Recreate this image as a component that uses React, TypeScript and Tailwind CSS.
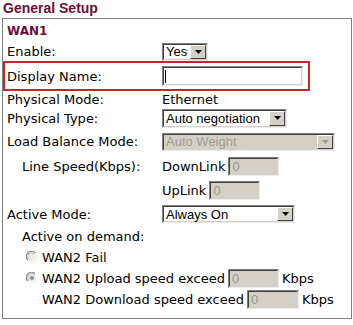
import React from "react";

function Arrow({ disabled }: { disabled?: boolean }) {
  return (
    <div className="h-full w-[16px] bg-[#d4d0c8] border border-t-white border-l-white border-r-[#404040] border-b-[#404040] flex items-center justify-center">
      <svg width="7" height="4" viewBox="0 0 7 4">
        <path d="M0 0H7L3.5 4Z" fill={disabled ? "#9a9a9a" : "#000"} />
      </svg>
    </div>
  );
}

function Select({ text, className, disabled }: { text: string; className: string; disabled?: boolean }) {
  return (
    <div className={`${className} border border-t-[#7f7f7f] border-l-[#7f7f7f] border-r-[#ececec] border-b-[#ececec]`}>
      <div
        className={`h-full w-full flex items-stretch border border-t-[#404040] border-l-[#404040] border-r-[#d4d0c8] border-b-[#d4d0c8] ${
          disabled ? "bg-[#d4d0c8]" : "bg-white"
        }`}
      >
        <div
          className={`flex-1 flex items-center pl-[2px] font-['Liberation_Sans',sans-serif] text-[13px] leading-none ${
            disabled ? "text-[#a09c94]" : "text-black"
          }`}
        >
          {text}
        </div>
        <div className="p-0">
          <Arrow disabled={disabled} />
        </div>
      </div>
    </div>
  );
}

function DisInput({ className }: { className: string }) {
  return (
    <div className={`${className} border border-t-[#7f7f7f] border-l-[#7f7f7f] border-r-[#ececec] border-b-[#ececec]`}>
      <div className="h-full w-full border border-t-[#404040] border-l-[#404040] border-r-[#d4d0c8] border-b-[#d4d0c8] bg-[#d4d0c8] flex items-center pl-[2px] font-['Liberation_Sans',sans-serif] text-[13px] leading-none text-[#9a968e]">
        0
      </div>
    </div>
  );
}

function Radio({ checked }: { checked?: boolean }) {
  return (
    <svg width="12" height="12" viewBox="0 0 12 12" className="shrink-0">
      <circle cx="6" cy="6" r="5.5" fill="#ecebe6" />
      <path d="M1.8 9.2A5 5 0 0 1 9.2 1.8" stroke="#8a8a8a" strokeWidth="1.2" fill="none" />
      <path d="M2.8 8.2A3.6 3.6 0 0 1 8.2 2.8" stroke="#b8b8b8" strokeWidth="1" fill="none" />
      <path d="M9.2 1.8A5 5 0 0 1 1.8 9.2" stroke="#ffffff" strokeWidth="1.2" fill="none" />
      {checked && <circle cx="6" cy="6" r="2" fill="#8a8a8a" />}
    </svg>
  );
}

export default function App() {
  return (
    <div className="w-[353px] h-[325px] bg-white font-['DejaVu_Sans',sans-serif] text-[13px] text-black leading-none">
      <div className="h-[18px] pl-[3px] pt-[1px] font-['Liberation_Sans',sans-serif] font-bold text-[14px] leading-[14px] text-[#6b0f3a]">
        General Setup
      </div>
      <div className="ml-[2px] w-[350px] h-[301px] border border-[#808080] flex flex-col">
        <div className="h-[23px] flex items-center pl-[4px] font-bold text-[12px] text-[#6b0f3a]">WAN1</div>
        <div className="h-[19px] flex items-center">
          <div className="w-[159px] pl-[4px]">Enable:</div>
          <Select text="Yes" className="w-[46px] h-[18px]" />
        </div>
        <div className="h-[30px] w-[307px] border-2 border-[#c4262e] flex items-center">
          <div className="w-[157px] pl-[2px]">Display Name:</div>
          <div className="w-[141px] h-[20px] border border-t-[#7f7f7f] border-l-[#7f7f7f] border-r-[#ececec] border-b-[#ececec]">
            <div className="h-full w-full border border-t-[#404040] border-l-[#404040] border-r-[#d4d0c8] border-b-[#d4d0c8] bg-white flex items-center pl-[1px]">
              <div className="w-[1px] h-[13px] bg-black" />
            </div>
          </div>
        </div>
        <div className="h-[16px] flex items-center">
          <div className="w-[159px] pl-[4px]">Physical Mode:</div>
          <div>Ethernet</div>
        </div>
        <div className="h-[22px] flex items-center">
          <div className="w-[159px] pl-[4px]">Physical Type:</div>
          <Select text="Auto negotiation" className="w-[125px] h-[19px]" />
        </div>
        <div className="h-[25px] flex items-center">
          <div className="w-[159px] pl-[4px]">Load Balance Mode:</div>
          <Select text="Auto Weight" className="w-[173px] h-[18px]" disabled />
        </div>
        <div className="h-[24px] flex items-center">
          <div className="w-[159px] pl-[19px]">Line Speed(Kbps):</div>
          <div className="mr-[3px]">DownLink</div>
          <DisInput className="w-[51px] h-[19px]" />
        </div>
        <div className="h-[24px] flex items-center">
          <div className="w-[159px]" />
          <div className="mr-[3px]">UpLink</div>
          <DisInput className="w-[51px] h-[19px]" />
        </div>
        <div className="h-[24px] flex items-center">
          <div className="w-[159px] pl-[4px]">Active Mode:</div>
          <Select text="Always On" className="w-[133px] h-[18px]" />
        </div>
        <div className="h-[20px] flex items-center pl-[19px]">Active on demand:</div>
        <div className="h-[22px] flex items-center pl-[23px]">
          <Radio />
          <div className="ml-[4px]">WAN2 Fail</div>
        </div>
        <div className="h-[20px] flex items-center pl-[23px]">
          <Radio checked />
          <div className="ml-[4px] mr-[3px]">WAN2 Upload speed exceed</div>
          <DisInput className="w-[51px] h-[19px]" />
          <div className="ml-[3px]">Kbps</div>
        </div>
        <div className="h-[23px] flex items-center pl-[39px]">
          <div className="mr-[3px]">WAN2 Download speed exceed</div>
          <DisInput className="w-[52px] h-[19px]" />
          <div className="ml-[3px]">Kbps</div>
        </div>
      </div>
    </div>
  );
}
